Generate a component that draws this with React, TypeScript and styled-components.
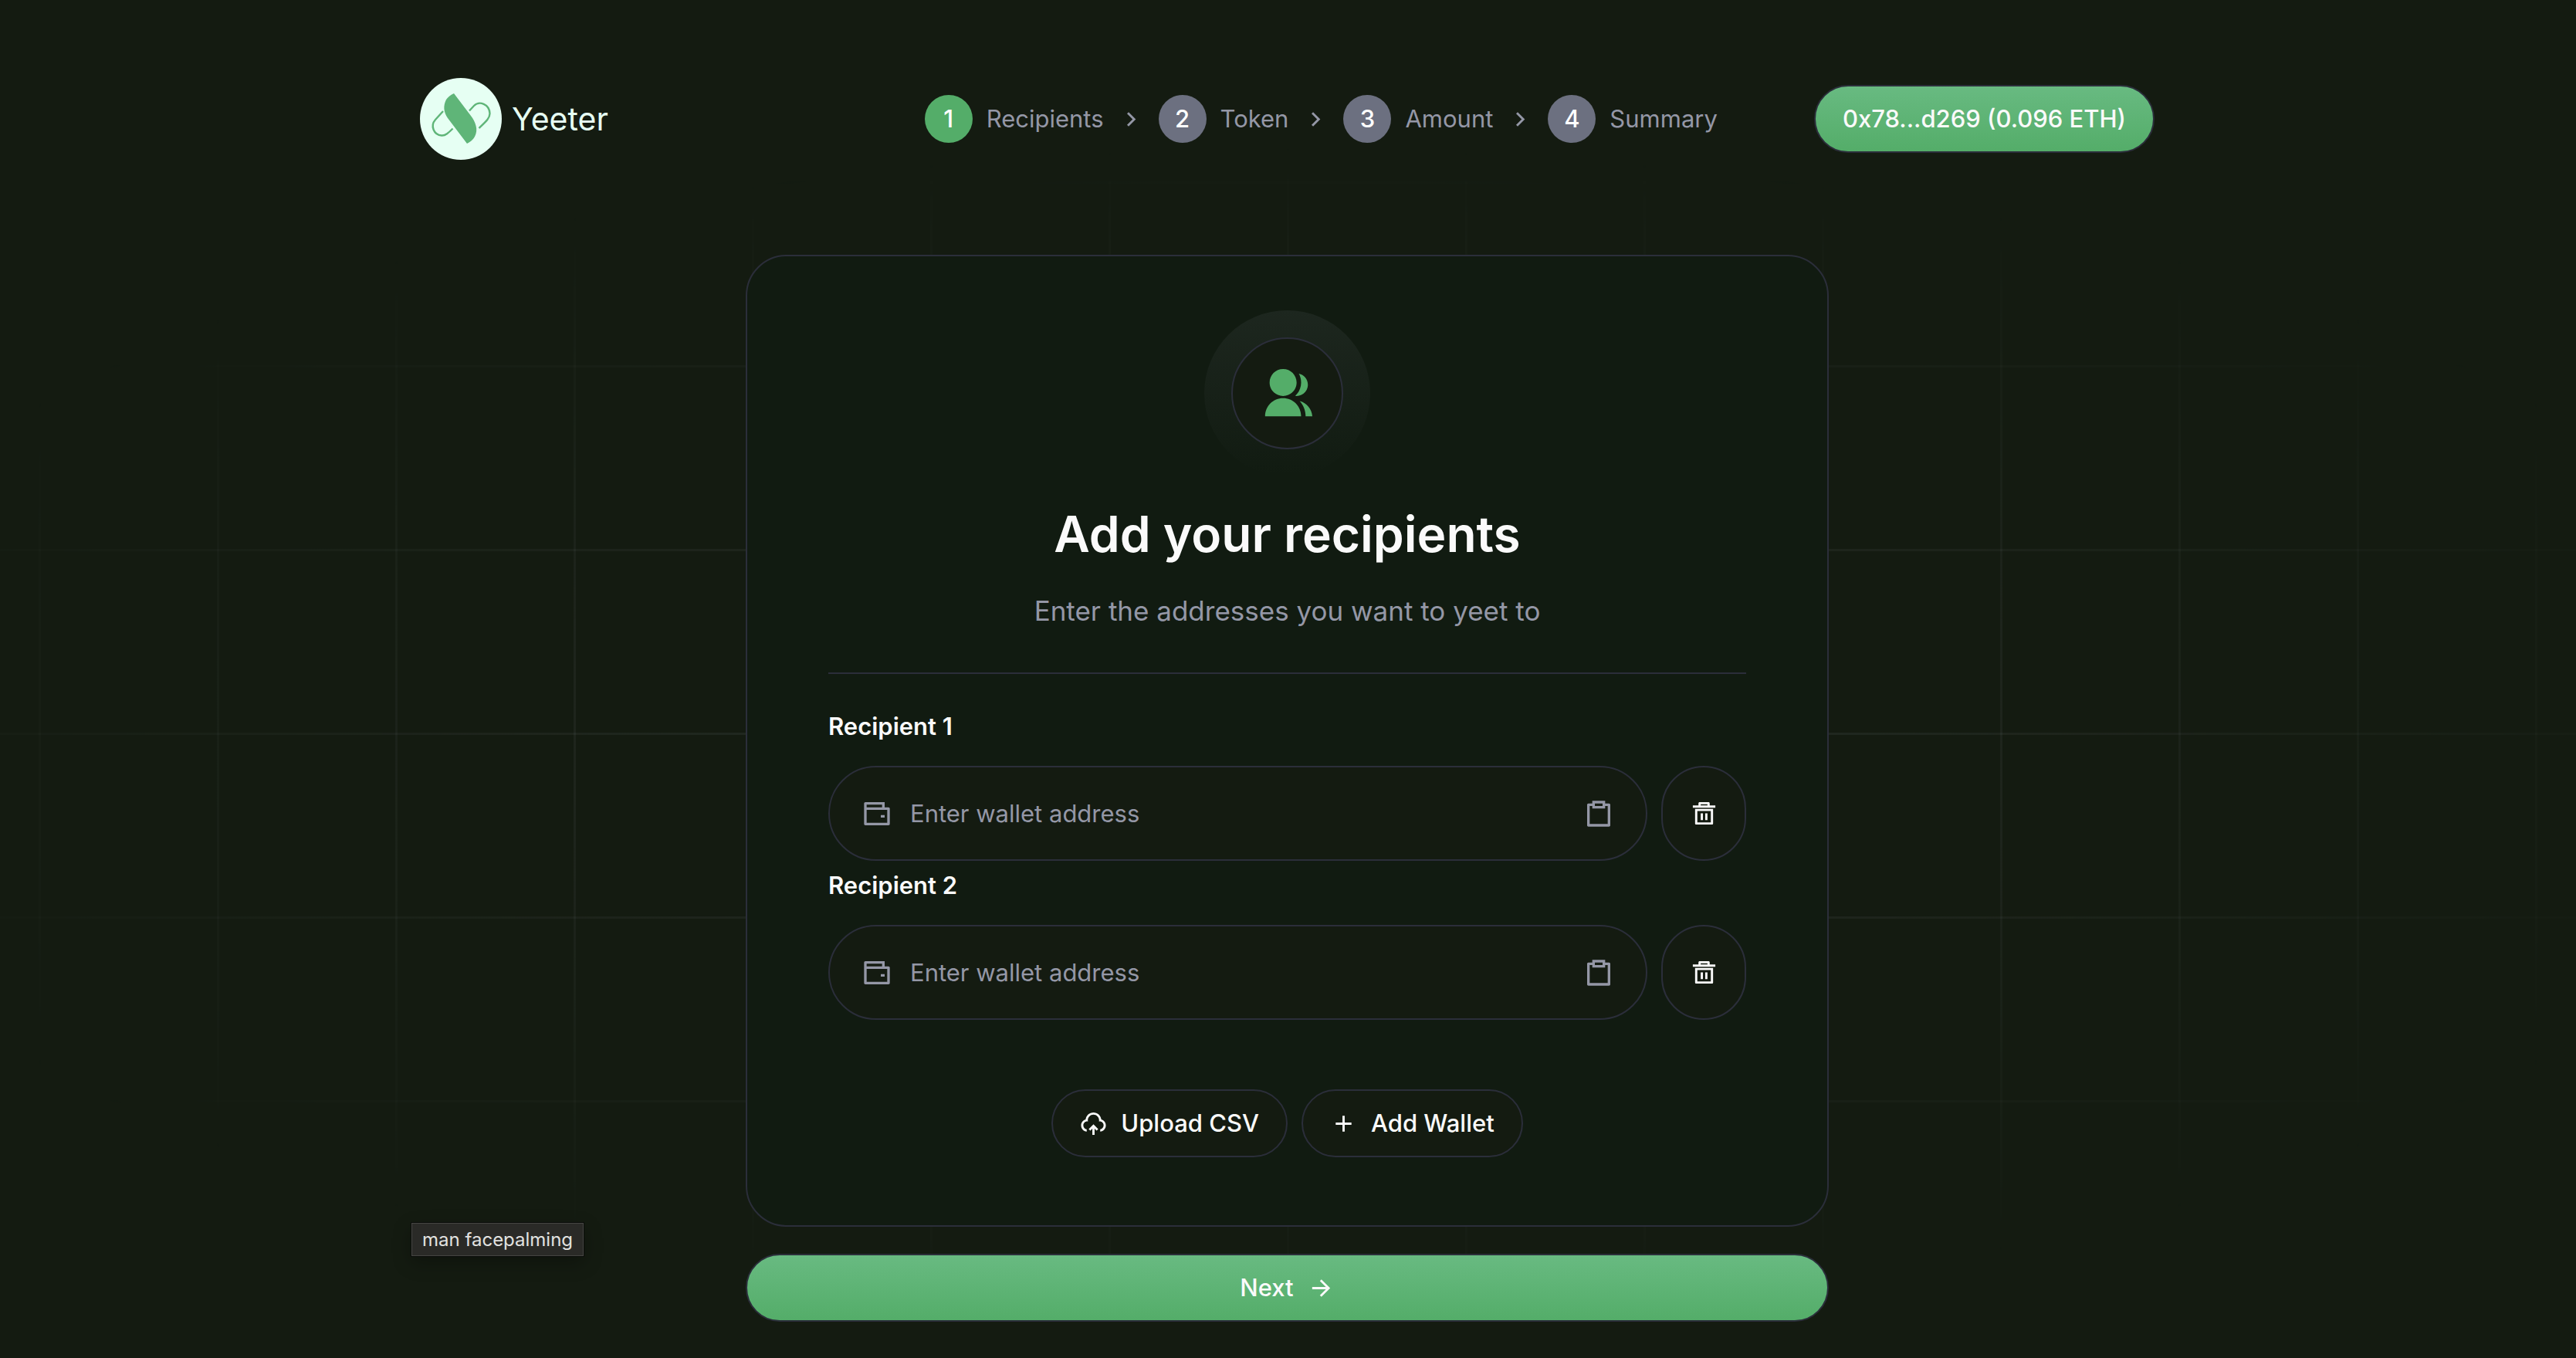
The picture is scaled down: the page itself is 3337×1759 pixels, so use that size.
import React, { Fragment, useState } from "react";
import styled, { createGlobalStyle, css } from "styled-components";
import {
  RiAddLine,
  RiArrowRightLine,
  RiArrowRightSLine,
  RiClipboardLine,
  RiDeleteBin5Line,
  RiGroupFill,
  RiUploadCloud2Line,
  RiWalletLine,
} from "react-icons/ri";

const color = {
  page: "#141b11",
  card: "#111b11",
  line: "#2b2e3a",
  text: "#fafafa",
  muted: "#9497a6",
  step: "#6c7080",
  green: "#54ad69",
  greenLight: "#68ba81",
  mint: "#e6fff3",
};

const GlobalStyle = createGlobalStyle`
  *, *::before, *::after { box-sizing: border-box; }
  body {
    margin: 0;
    background: ${color.page};
    color: ${color.text};
    font-family: Inter, "Liberation Sans", sans-serif;
    font-size: 31px;
    line-height: 44px;
  }
  button, input { font: inherit; color: inherit; }
  button { cursor: pointer; }
`;

const Page = styled.div`
  position: relative;
  isolation: isolate;
  min-height: 100vh;
  padding: 101px 2px 48px 0;

  &::before {
    content: "";
    position: absolute;
    inset: 0;
    z-index: -1;
    --grid-line: rgba(230, 240, 255, 0.09);
    background-image:
      linear-gradient(to right, transparent 114px, var(--grid-line) 114px, var(--grid-line) 117px, transparent 117px),
      linear-gradient(to bottom, transparent 118px, var(--grid-line) 118px, var(--grid-line) 121px, transparent 121px);
    background-size: 231px 238px;
    background-position: 50% 117px;
    mask-image: radial-gradient(ellipse 60% 44% at 50% 54%, #000, transparent);
  }
`;

const Header = styled.header`
  display: flex;
  align-items: center;
  gap: 125px;
  max-width: 2247px;
  margin: 0 auto 123px;
`;

const Brand = styled.a`
  display: flex;
  align-items: center;
  gap: 13px;
  margin-right: auto;
  color: ${color.mint};
  font-size: 41px;
  line-height: 56px;
  text-decoration: none;
`;

const Steps = styled.nav`
  display: flex;
  align-items: center;
  gap: 18px;
  color: ${color.muted};
`;

const Step = styled.span`
  display: flex;
  align-items: center;
  gap: 18px;
`;

const StepNumber = styled.span<{ $active: boolean }>`
  display: grid;
  place-items: center;
  width: 62px;
  height: 62px;
  border-radius: 50%;
  background: ${(p) => (p.$active ? color.green : color.step)};
  color: #fff;
  font-weight: 500;
`;

const Button = styled.button<{ $variant: "primary" | "outline" }>`
  display: flex;
  align-items: center;
  justify-content: center;
  gap: 18px;
  height: 88px;
  padding: 0 35px;
  border: 2px solid ${color.line};
  border-radius: 44px;
  color: ${color.text};
  font-weight: 500;
  ${(p) =>
    p.$variant === "primary"
      ? css`background: linear-gradient(${color.greenLight}, ${color.green});`
      : css`background: ${color.page};`}
`;

const Main = styled.main`
  display: flex;
  flex-direction: column;
  gap: 35px;
  max-width: 1403px;
  margin: 0 auto;
`;

const Card = styled.section`
  display: flex;
  flex-direction: column;
  padding: 70px 105px 88px;
  border: 2px solid ${color.line};
  border-radius: 53px;
  background: ${color.card};
`;

const Intro = styled.div`
  display: flex;
  flex-direction: column;
  align-items: center;
  padding-bottom: 53px;
  border-bottom: 2px solid ${color.line};
  text-align: center;
`;

const Halo = styled.div`
  padding: 35px;
  border-radius: 50%;
  background: linear-gradient(rgba(150, 155, 170, 0.09), rgba(150, 155, 170, 0));
`;

const Badge = styled.div`
  display: grid;
  place-items: center;
  width: 145px;
  height: 145px;
  border: 2px solid ${color.line};
  border-radius: 50%;
  background: ${color.page};
  color: ${color.green};
`;

const Title = styled.h1`
  margin: 35px 0 32px;
  font-size: 64px;
  line-height: 80px;
  font-weight: 600;
`;

const Subtitle = styled.p`
  margin: 0;
  color: ${color.muted};
  font-size: 35px;
  line-height: 54px;
`;

const Fields = styled.form`
  display: flex;
  flex-direction: column;
  gap: 16px;
  padding-top: 52px;
`;

const Field = styled.div`
  display: flex;
  flex-direction: column;
  gap: 36px;
`;

const FieldLabel = styled.label`
  line-height: 31px;
  font-weight: 600;
`;

const FieldRow = styled.div`
  display: flex;
  gap: 18px;
`;

const InputBox = styled.div`
  flex: 1;
  display: flex;
  align-items: center;
  gap: 23px;
  height: 123px;
  padding: 0 41px;
  border: 2px solid ${color.line};
  border-radius: 62px;
  background: ${color.page};
  color: ${color.muted};
`;

const AddressInput = styled.input`
  flex: 1;
  min-width: 0;
  padding: 0;
  border: 0;
  outline: 0;
  background: transparent;
  color: ${color.text};
  &::placeholder { color: ${color.muted}; opacity: 1; }
`;

const PasteButton = styled.button`
  display: flex;
  padding: 0;
  border: 0;
  background: transparent;
`;

const DeleteButton = styled.button`
  display: grid;
  place-items: center;
  width: 110px;
  height: 123px;
  padding: 0;
  border: 2px solid ${color.line};
  border-radius: 62px;
  background: ${color.page};
`;

const Actions = styled.div`
  display: flex;
  justify-content: center;
  gap: 18px;
  margin-top: 90px;
`;

const Tooltip = styled.div`
  position: absolute;
  left: 533px;
  top: 1584px;
  padding: 0 13px;
  border: 1px solid #454542;
  outline: 1px solid #0b0d0a;
  background: #2a2a27;
  box-shadow: 0 8px 24px rgba(0, 0, 0, 0.3);
  color: #e2e2e0;
  font-size: 24px;
  line-height: 41px;
`;

const Logo = () => (
  <svg width="106" height="106" viewBox="0 0 106 106" fill="none" aria-hidden="true">
    <circle cx="53" cy="53" r="53" fill={color.mint} />
    <path
      d="M30 43 20 54C13 62 18 74 28 74.5C33 75 37 71 42.5 65.5M64 42.5 70 36C77 29 90 34 90.5 46C90.5 52 86 56 76.5 65"
      stroke="#5fb578"
      strokeWidth="2.4"
    />
    <path
      d="M44 20 66 49C72 57 76 67 71 76C69 80 65 83 61 85L36 52C30.500 44 30 36 34 28C36 25 40 21.500 44 20Z"
      fill="#5fb578"
    />
  </svg>
);

const steps = ["Recipients", "Token", "Amount", "Summary"];

export default function App() {
  const [addresses, setAddresses] = useState(["", ""]);

  const update = (index: number, value: string) =>
    setAddresses((list) => list.map((item, i) => (i === index ? value : item)));
  const remove = (index: number) =>
    setAddresses((list) => list.filter((_, i) => i !== index));

  return (
    <>
      <GlobalStyle />
      <Page>
        <Header>
          <Brand href="#">
            <Logo />
            Yeeter
          </Brand>
          <Steps aria-label="Progress">
            {steps.map((name, i) => (
              <Fragment key={name}>
                {i > 0 && <RiArrowRightSLine size={35} />}
                <Step aria-current={i === 0 ? "step" : undefined}>
                  <StepNumber $active={i === 0}>{i + 1}</StepNumber>
                  {name}
                </Step>
              </Fragment>
            ))}
          </Steps>
          <Button type="button" $variant="primary">0x78...d269 (0.096 ETH)</Button>
        </Header>

        <Main>
          <Card>
            <Intro>
              <Halo>
                <Badge>
                  <RiGroupFill size={70} />
                </Badge>
              </Halo>
              <Title>Add your recipients</Title>
              <Subtitle>Enter the addresses you want to yeet to</Subtitle>
            </Intro>
            <Fields>
              {addresses.map((address, i) => (
                <Field key={i}>
                  <FieldLabel htmlFor={`recipient-${i}`}>Recipient {i + 1}</FieldLabel>
                  <FieldRow>
                    <InputBox>
                      <RiWalletLine size={40} />
                      <AddressInput
                        id={`recipient-${i}`}
                        type="text"
                        placeholder="Enter wallet address"
                        value={address}
                        onChange={(e) => update(i, e.target.value)}
                      />
                      <PasteButton type="button" aria-label="Paste address">
                        <RiClipboardLine size={40} />
                      </PasteButton>
                    </InputBox>
                    <DeleteButton type="button" aria-label="Remove recipient" onClick={() => remove(i)}>
                      <RiDeleteBin5Line size={35} />
                    </DeleteButton>
                  </FieldRow>
                </Field>
              ))}
            </Fields>
            <Actions>
              <Button type="button" $variant="outline">
                <RiUploadCloud2Line size={35} />
                Upload CSV
              </Button>
              <Button type="button" $variant="outline" onClick={() => setAddresses((list) => [...list, ""])}>
                <RiAddLine size={35} />
                Add Wallet
              </Button>
            </Actions>
          </Card>
          <Button type="button" $variant="primary">
            Next
            <RiArrowRightLine size={35} />
          </Button>
        </Main>
        <Tooltip role="tooltip">man facepalming</Tooltip>
      </Page>
    </>
  );
}
